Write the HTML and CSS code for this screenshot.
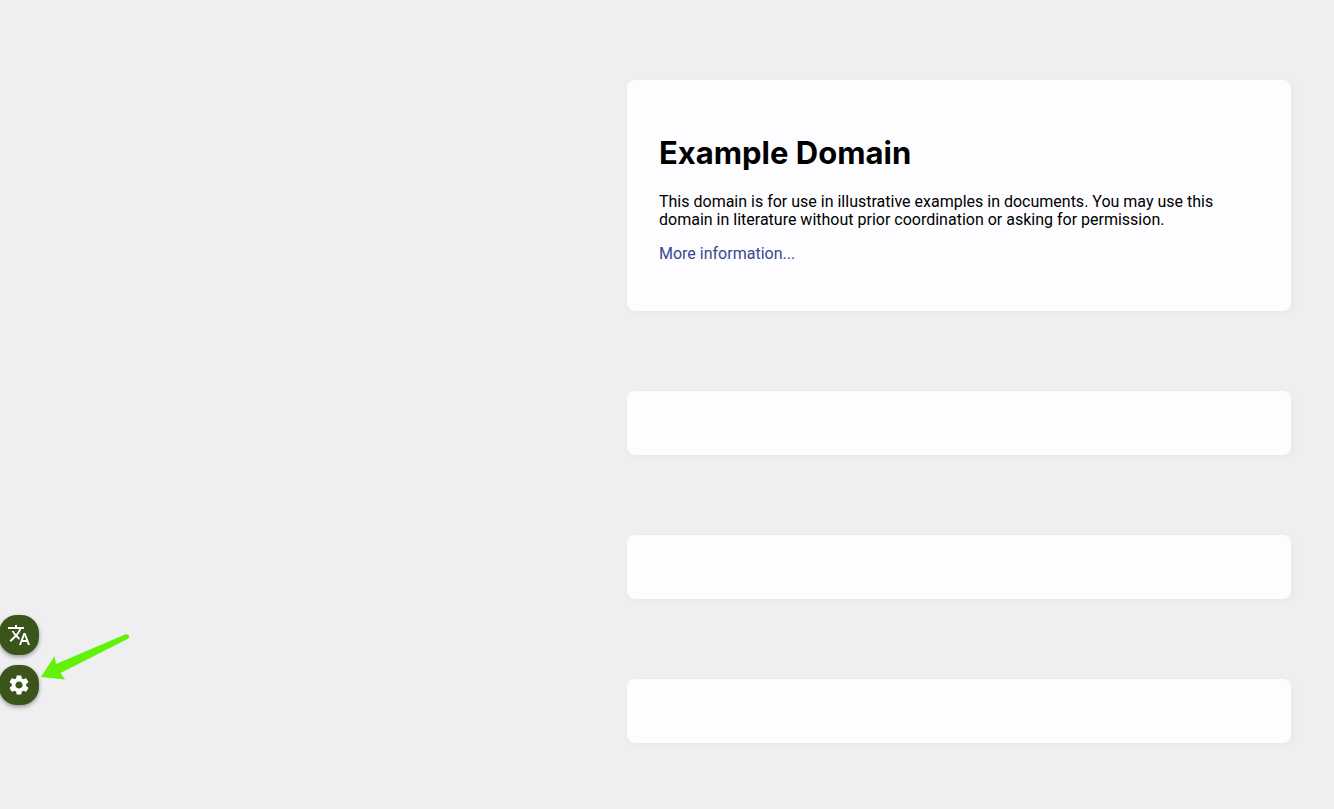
FILE: index.html
```html
<!DOCTYPE html>
<html lang="en">
<head>
    <meta charset="utf-8" />
    <meta name="viewport" content="width=device-width, initial-scale=1" />
    <title>Example Domain</title>
    <link rel="stylesheet" href="styles.css">
</head>
<body>
    <main class="page">
        <div class="card">
            <h1>Example Domain</h1>
            <p>This domain is for use in illustrative examples in documents. You may use this domain in literature without prior coordination or asking for permission.</p>
            <p><a href="#">More information...</a></p>
        </div>
        <div class="card"></div>
        <div class="card"></div>
        <div class="card"></div>
    </main>

    <div class="float-menu">
        <button type="button" class="float-btn" aria-label="Translate">
            <svg viewBox="0 0 24 24" width="24" height="24">
                <path fill="currentColor" d="M12.87 15.07l-2.54-2.51.03-.03c1.74-1.94 2.98-4.17 3.71-6.53H17V4h-7V2H8v2H1v1.99h11.17C11.5 7.92 10.44 9.75 9 11.35 8.07 10.32 7.3 9.19 6.69 8h-2c.73 1.63 1.73 3.17 2.98 4.56l-5.09 5.02L4 19l5-5 3.11 3.11.76-2.04zM18.5 10h-2L12 22h2l1.12-3h4.75L21 22h2l-4.5-12zm-2.62 7l1.62-4.33L19.12 17h-3.24z"/>
            </svg>
        </button>
        <button type="button" class="float-btn" aria-label="Settings">
            <svg viewBox="0 0 24 24" width="24" height="24">
                <path fill="currentColor" d="M19.14 12.94c.04-.3.06-.61.06-.94 0-.32-.02-.64-.07-.94l2.03-1.58c.18-.14.23-.41.12-.61l-1.92-3.32c-.12-.22-.37-.29-.59-.22l-2.39.96c-.5-.38-1.03-.7-1.62-.94L14.4 2.81c-.04-.24-.24-.41-.48-.41h-3.84c-.24 0-.43.17-.47.41L9.25 5.35C8.66 5.59 8.12 5.92 7.63 6.29L5.24 5.33c-.22-.08-.47 0-.59.22L2.74 8.87C2.62 9.08 2.66 9.34 2.86 9.48l2.03 1.58C4.84 11.36 4.8 11.69 4.8 12s.02.64.07.94l-2.03 1.58c-.18.14-.23.41-.12.61l1.92 3.32c.12.22.37.29.59.22l2.39-.96c.5.38 1.03.7 1.62.94l.36 2.54c.05.24.24.41.48.41h3.84c.24 0 .44-.17.47-.41l.36-2.54c.59-.24 1.13-.56 1.62-.94l2.39.96c.22.08.47 0 .59-.22l1.92-3.32c.12-.22.07-.47-.12-.61L19.14 12.94zM12 15.6c-1.98 0-3.6-1.62-3.6-3.6s1.62-3.6 3.6-3.6 3.6 1.62 3.6 3.6-1.62 3.6-3.6 3.6z"/>
            </svg>
        </button>
        <!-- Arrow pointing at the settings button -->
        <svg class="arrow" viewBox="0 0 90 50" width="90" height="50" aria-hidden="true">
            <path fill="#62f20a" d="M1 46L14.5 25L16 33L85 3.500Q88 2.500 89 4.500Q89.800 6.800 87 8.200L20.500 42L25 48.500Z"/>
        </svg>
    </div>
</body>
</html>
```

FILE: styles.css
```css
:root {
    --page-background: #efeff1;
    --card-background: #fdfdff;
    --link-color: #38488f;
    --button-color: #3b541b;
}

body {
    margin: 0;
    background-color: var(--page-background);
    color: #000;
    font-family: Roboto, "Open Sans", sans-serif;
    font-size: 16px;
    line-height: 18px;
}

.page {
    display: flex;
    flex-direction: column;
    align-items: flex-end;
    gap: 80px;
    padding: 80px 43px 64px;
}

.card {
    box-sizing: border-box;
    width: 100%;
    max-width: 664px;
    padding: 32px;
    background-color: var(--card-background);
    border-radius: 8px;
    box-shadow: 2px 3px 7px 2px rgba(0, 0, 0, 0.02);
}

.card h1 {
    margin: 21px 0;
    font-family: Inter, "Open Sans", sans-serif;
    font-size: 31px;
    line-height: 39px;
}

.card p {
    margin: 16px 0;
}

.card a {
    color: var(--link-color);
    text-decoration: none;
}

/* Buttons docked to the left edge of the window */
.float-menu {
    position: fixed;
    left: -1px;
    bottom: 104px;
    display: flex;
    flex-direction: column;
    gap: 10px;
}

.float-btn {
    display: flex;
    align-items: center;
    justify-content: center;
    width: 40px;
    height: 40px;
    padding: 0;
    border: none;
    border-radius: 18px;
    background-color: var(--button-color);
    color: #fff;
    cursor: pointer;
    box-shadow: 0 2px 4px rgba(0, 0, 0, 0.35);
}

.arrow {
    position: absolute;
    left: 41px;
    top: 16px;
}
```
